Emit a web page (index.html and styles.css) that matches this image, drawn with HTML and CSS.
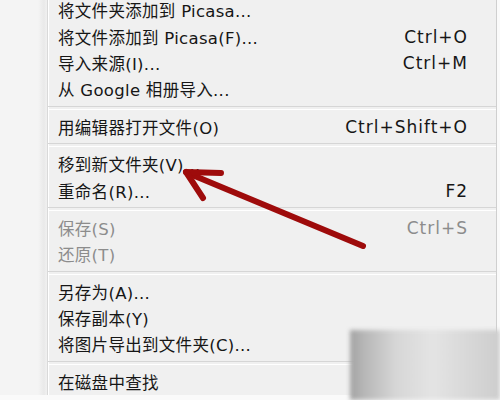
FILE: index.html
```html
<!DOCTYPE html>
<html lang="zh-CN">
<head>
    <meta charset="UTF-8">
    <meta name="viewport" content="width=device-width, initial-scale=1.0">
    <title>Picasa 文件菜单</title>
    <link rel="stylesheet" href="styles.css">
</head>
<body>
    <div class="menu">
        <div class="menu-gutter"></div>
        <ul class="menu-list">
            <li class="menu-item"><span>将文件夹添加到 Picasa...</span></li>
            <li class="menu-item"><span>将文件添加到 Picasa(F)...</span><span class="key">Ctrl+O</span></li>
            <li class="menu-item"><span>导入来源(I)...</span><span class="key">Ctrl+M</span></li>
            <li class="menu-item"><span>从 Google 相册导入...</span></li>
            <li class="menu-sep"></li>
            <li class="menu-item"><span>用编辑器打开文件(O)</span><span class="key">Ctrl+Shift+O</span></li>
            <li class="menu-sep"></li>
            <li class="menu-item"><span>移到新文件夹(V)...</span></li>
            <li class="menu-item"><span>重命名(R)...</span><span class="key">F2</span></li>
            <li class="menu-sep"></li>
            <li class="menu-item disabled"><span>保存(S)</span><span class="key">Ctrl+S</span></li>
            <li class="menu-item disabled"><span>还原(T)</span></li>
            <li class="menu-sep"></li>
            <li class="menu-item"><span>另存为(A)...</span></li>
            <li class="menu-item"><span>保存副本(Y)</span></li>
            <li class="menu-item"><span>将图片导出到文件夹(C)...</span></li>
            <li class="menu-sep"></li>
            <li class="menu-item"><span>在磁盘中查找</span></li>
        </ul>
    </div>

    <!-- red annotation arrow -->
    <svg class="arrow" width="500" height="400" viewBox="0 0 500 400">
        <g stroke="#9e0b0b" stroke-width="6" stroke-linecap="round" fill="none">
            <line x1="363" y1="246" x2="190" y2="174"/>
            <line x1="186" y1="172" x2="221" y2="173"/>
            <line x1="186" y1="172" x2="203" y2="198"/>
        </g>
    </svg>

    <div class="watermark"></div>
</body>
</html>
```

FILE: styles.css
```css
* {
    margin: 0;
    padding: 0;
    box-sizing: border-box;
}
body {
    width: 500px;
    height: 400px;
    overflow: hidden;
    background-color: #fafafa;
    font-family: "DejaVu Sans", "Noto Sans CJK SC", sans-serif;
    color: #161616;
    position: relative;
}
.menu {
    display: flex;
    width: 497px;
    margin-top: -3px;
    background-color: #f0f0f0;
    border-right: 1px solid #cfcfcf;
}
.menu-gutter {
    width: 48px;
    flex-shrink: 0;
    background: linear-gradient(to right, #f4f4f4 0, #f4f4f4 38px, #e9e9e9 44px, #efefef 46px);
    border-right: 1px solid #d9d9d9;
    box-shadow: 1px 0 0 #fff;
}
.menu-list {
    list-style: none;
    flex: 1;
    padding-left: 10px;
    padding-right: 28px;
}
.menu-item {
    display: flex;
    justify-content: space-between;
    align-items: center;
    height: 26.4px;
    font-size: 16.5px;
    letter-spacing: 0.3px;
    white-space: nowrap;
}
.menu-item.disabled {
    color: #8c8c8c;
}
.key {
    font-size: 17px;
    letter-spacing: 1px;
}
.menu-sep {
    height: 11px;
    margin-left: -10px;
    margin-right: -28px;
    display: flex;
    align-items: center;
}
.menu-sep::before {
    content: "";
    display: block;
    width: 100%;
    height: 2px;
    border-top: 1px solid #d6d6d6;
    border-bottom: 1px solid #fff;
}
.arrow {
    position: absolute;
    left: 0;
    top: 0;
}
.watermark {
    position: absolute;
    left: 350px;
    top: 330px;
    width: 150px;
    height: 70px;
    background: linear-gradient(to right, #a3a3a3 0, #b8b8b8 10%, #d6d6d6 30%, #e4e4e4 55%, #cdcdcd 100%);
    filter: blur(2px);
}
```
